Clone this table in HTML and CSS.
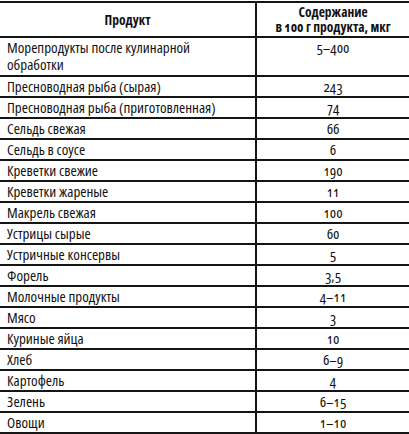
FILE: index.html
```html
<!DOCTYPE html>
<html lang="ru">
<head>
<meta charset="utf-8">
<title>Содержание</title>
<link rel="stylesheet" href="styles.css">
</head>
<body>
<table class="data">
  <thead>
    <tr>
      <th class="col-name">Продукт</th>
      <th class="col-val">Содержание<br>в 100 г продукта, мкг</th>
    </tr>
  </thead>
  <tbody>
    <tr class="tall"><td>Морепродукты после кулинарной<br>обработки</td><td>5–400</td></tr>
    <tr><td>Пресноводная рыба (сырая)</td><td>243</td></tr>
    <tr><td>Пресноводная рыба (приготовленная)</td><td>74</td></tr>
    <tr><td>Сельдь свежая</td><td>66</td></tr>
    <tr><td>Сельдь в соусе</td><td>6</td></tr>
    <tr><td>Креветки свежие</td><td>190</td></tr>
    <tr><td>Креветки жареные</td><td>11</td></tr>
    <tr><td>Макрель свежая</td><td>100</td></tr>
    <tr><td>Устрицы сырые</td><td>60</td></tr>
    <tr><td>Устричные консервы</td><td>5</td></tr>
    <tr><td>Форель</td><td>3,5</td></tr>
    <tr><td>Молочные продукты</td><td>4–11</td></tr>
    <tr><td>Мясо</td><td>3</td></tr>
    <tr><td>Куриные яйца</td><td>10</td></tr>
    <tr><td>Хлеб</td><td>6–9</td></tr>
    <tr><td>Картофель</td><td>4</td></tr>
    <tr><td>Зелень</td><td>6–15</td></tr>
    <tr><td>Овощи</td><td>1–10</td></tr>
  </tbody>
</table>
</body>
</html>
```
FILE: styles.css
```css
html, body {
  margin: 0;
  padding: 0;
  background: #fff;
}
body {
  font-family: "Open Sans", "Liberation Sans", sans-serif;
  color: #111;
  font-variant-numeric: oldstyle-nums;
  font-feature-settings: "onum" 1;
  font-stretch: 87%;
}
.data {
  width: 409px;
  margin-top: 1px;
  border-collapse: collapse;
  border-top: 2px solid #151515;
  border-bottom: 2px solid #151515;
}
.data th {
  font-size: 13.5px;
  font-weight: 700;
  line-height: 15px;
  padding: 2px 0 1px;
  height: 30px;
  text-align: center;
  white-space: nowrap;
  border-bottom: 2px solid #151515;
}
.data th.col-name {
  width: 255px;
  border-right: 2px solid #151515;
}
.data td {
  font-size: 15px;
  font-weight: 500;
  line-height: 17px;
  height: 17px;
  padding: 1px 0 1px 7px;
  border-top: 2px solid #151515;
  white-space: nowrap;
}
.data tbody tr:first-child td {
  border-top: none;
}
.data td:first-child {
  border-right: 2px solid #151515;
}
.data td:last-child {
  text-align: center;
  padding-left: 0;
}
.data tr.tall td {
  height: 34px;
  padding-top: 1px;
  padding-bottom: 2px;
}
.data tr.tall td:last-child {
  vertical-align: top;
}
```
